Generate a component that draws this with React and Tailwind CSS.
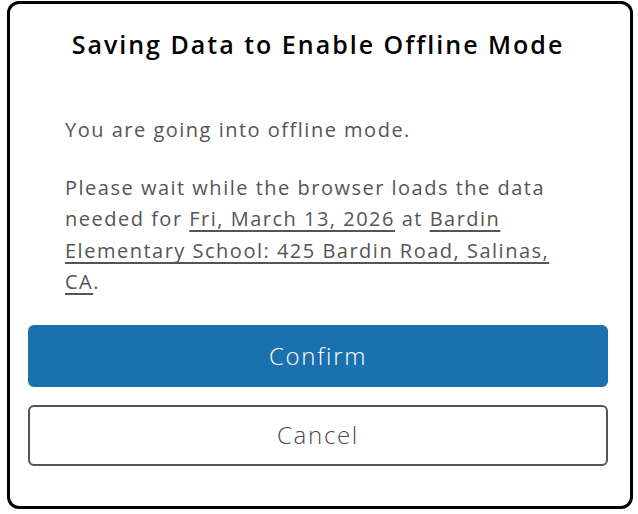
export default function App() {
  return (
    <div className="w-[638px] h-[514px] bg-white pl-[7px] pt-[1px]" style={{ fontFamily: '"Open Sans", "Noto Sans", sans-serif' }}>
      <div className="flex h-[508px] w-[626px] flex-col rounded-[12px] border-[3px] border-black bg-white pl-[18px] pr-[22px]">
        <h1 className="pt-[23px] text-center text-[25px] font-semibold leading-[34px] tracking-[2px] text-black">
          Saving Data to Enable Offline Mode
        </h1>
        <div className="mt-[53px] px-[37px] text-[20px] leading-[31.5px] tracking-[1.5px] text-[#555]">
          <p>You are going into offline mode.</p>
          <p className="mt-[26px] w-[510px]">
            Please wait while the browser loads the data needed for{' '}
            <span className="underline underline-offset-[4px] [text-decoration-skip-ink:none]">Fri, March 13, 2026</span> at{' '}
            <span className="underline underline-offset-[4px] [text-decoration-skip-ink:none]">Bardin Elementary School: 425 Bardin Road, Salinas, CA</span>.
          </p>
        </div>
        <div className="mt-[27px] flex flex-col gap-[18px]">
          <button className="h-[62px] rounded-[6px] bg-[#1a71ad] text-[24px] font-light tracking-[1.7px] text-white">Confirm</button>
          <button className="h-[61px] rounded-[6px] border-2 border-[#555] bg-white text-[24px] font-light tracking-[1.7px] text-[#4a4a4a]">Cancel</button>
        </div>
      </div>
    </div>
  )
}
